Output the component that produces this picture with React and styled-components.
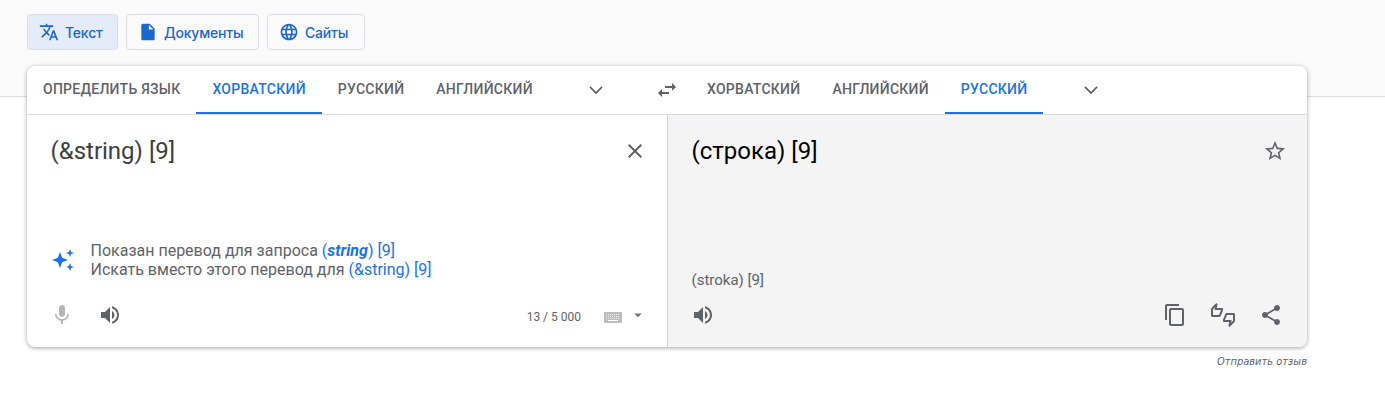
import React, { useState } from 'react';
import styled, { createGlobalStyle, css } from 'styled-components';

const icons = {
    translate: 'M12.87 15.07l-2.54-2.51.03-.03c1.74-1.94 2.98-4.17 3.71-6.53H17V4h-7V2H8v2H1v1.99h11.17C11.5 7.92 10.44 9.75 9 11.35 8.07 10.32 7.3 9.19 6.69 8h-2c.73 1.63 1.73 3.17 2.98 4.56l-5.09 5.02L4 19l5-5 3.11 3.11.76-2.04zM18.5 10h-2L12 22h2l1.12-3h4.75L21 22h2l-4.5-12zm-2.62 7l1.62-4.33L19.12 17h-3.24z',
    file: 'M6 2c-1.1 0-1.99.9-1.99 2L4 20c0 1.1.89 2 1.99 2H18c1.1 0 2-.9 2-2V8l-6-6H6zm7 7V3.5L18.5 9H13z',
    globe: 'M11.99 2C6.47 2 2 6.48 2 12s4.47 10 9.99 10C17.52 22 22 17.52 22 12S17.52 2 11.99 2zm6.93 6h-2.95c-.32-1.25-.78-2.45-1.38-3.56 1.84.63 3.37 1.91 4.33 3.56zM12 4.04c.83 1.2 1.48 2.53 1.91 3.96h-3.82c.43-1.43 1.08-2.76 1.91-3.96zM4.26 14C4.1 13.36 4 12.69 4 12s.1-1.36.26-2h3.38c-.08.66-.14 1.32-.14 2s.06 1.34.14 2H4.26zm.82 2h2.95c.32 1.25.78 2.45 1.38 3.56-1.84-.63-3.37-1.9-4.33-3.56zm2.95-8H5.08c.96-1.66 2.49-2.93 4.33-3.56C8.81 5.55 8.35 6.75 8.03 8zM12 19.96c-.83-1.2-1.48-2.53-1.91-3.96h3.82c-.43 1.43-1.08 2.76-1.91 3.96zM14.34 14H9.66c-.09-.66-.16-1.32-.16-2s.07-1.35.16-2h4.68c.09.65.16 1.32.16 2s-.07 1.34-.16 2zm.25 5.56c.6-1.11 1.06-2.31 1.38-3.56h2.95c-.96 1.65-2.49 2.93-4.33 3.56zM16.36 14c.08-.66.14-1.32.14-2s-.06-1.34-.14-2h3.38c.16.64.26 1.31.26 2s-.1 1.36-.26 2h-3.38z',
    chevron: 'M5.41 7.59L4 9l8 8 8-8-1.41-1.41L12 14.17z',
    swap: 'M6.99 11L3 15l3.99 4v-3H14v-2H6.99v-3zM21 9l-3.99-4v3H10v2h7.01v3L21 9z',
    close: 'M19 6.41L17.59 5 12 10.59 6.41 5 5 6.41 10.59 12 5 17.59 6.41 19 12 13.41 17.59 19 19 17.59 13.41 12z',
    star: 'M22 9.24l-7.19-.62L12 2 9.19 8.63 2 9.24l5.46 4.73L5.82 21 12 17.27 18.18 21l-1.63-7.03L22 9.24zM12 15.4l-3.76 2.27 1-4.28-3.32-2.88 4.38-.38L12 6.1l1.71 4.04 4.38.38-3.32 2.88 1 4.28L12 15.4z',
    sparkle: 'M9 4l2.2 5.8L17 12l-5.8 2.2L9 20l-2.2-5.8L1 12l5.8-2.2zM19 1l1.1 2.9L23 5l-2.9 1.1L19 9l-1.1-2.9L15 5l2.9-1.1zM19 15l1.1 2.9L23 19l-2.9 1.1L19 23l-1.1-2.9L15 19l2.9-1.1z',
    mic: 'M12 14c1.66 0 2.99-1.34 2.99-3L15 5c0-1.66-1.34-3-3-3S9 3.34 9 5v6c0 1.66 1.34 3 3 3zm5.3-3c0 3-2.54 5.1-5.3 5.1S6.7 14 6.7 11H5c0 3.41 2.72 6.23 6 6.72V21h2v-3.28c3.28-.48 6-3.3 6-6.72h-1.7z',
    volume: 'M3 9v6h4l5 5V4L7 9H3zm13.5 3c0-1.77-1.02-3.29-2.5-4.03v8.05c1.48-.73 2.5-2.25 2.5-4.02zM14 3.23v2.06c2.89.86 5 3.54 5 6.71s-2.11 5.85-5 6.71v2.06c4.01-.91 7-4.49 7-8.77s-2.99-7.86-7-8.77z',
    caret: 'M7 10l5 5 5-5z',
    copy: 'M16 1H4c-1.1 0-2 .9-2 2v14h2V3h12V1zm3 4H8c-1.1 0-2 .9-2 2v14c0 1.1.9 2 2 2h11c1.1 0 2-.9 2-2V7c0-1.1-.9-2-2-2zm0 16H8V7h11v14z',
    thumbs: 'M12 6c0-.55-.45-1-1-1H5.82l.66-3.18.02-.23c0-.31-.13-.59-.33-.8L5.38 0 .44 4.94C.17 5.21 0 5.59 0 6v6.5c0 .83.67 1.5 1.5 1.5h6.75c.62 0 1.15-.38 1.38-.91l2.26-5.29c.07-.17.11-.36.11-.55V6zm-2 1.13L7.92 12H2V6.21l1.93-1.93L3.36 7H10v.13zM22.5 10h-6.75c-.62 0-1.15.38-1.38.91l-2.26 5.29c-.07.17-.11.36-.11.55V18c0 .55.45 1 1 1h5.18l-.66 3.18-.02.24c0 .31.13.59.33.8l.79.78 4.94-4.94c.27-.27.44-.65.44-1.06v-6.5c0-.83-.67-1.5-1.5-1.5zm-.5 7.79l-1.93 1.93.57-2.72H14v-.13L16.08 12H22v5.79z',
    share: 'M18 16.08c-.76 0-1.44.3-1.96.77L8.91 12.7c.05-.23.09-.46.09-.7s-.04-.47-.09-.7l7.05-4.11c.54.5 1.25.81 2.04.81 1.66 0 3-1.34 3-3s-1.34-3-3-3-3 1.34-3 3c0 .24.04.47.09.7L8.04 9.81C7.5 9.31 6.79 9 6 9c-1.66 0-3 1.34-3 3s1.34 3 3 3c.79 0 1.5-.31 2.04-.81l7.12 4.16c-.05.21-.08.43-.08.65 0 1.61 1.31 2.92 2.92 2.92s2.92-1.31 2.92-2.92-1.31-2.92-2.92-2.92z'
};

const Icon = ({ name, size = 24 }) => (
    <Svg width={size} height={size} viewBox="0 0 24 24">
        <path d={icons[name]} />
    </Svg>
);

const KeyboardIcon = () => (
    <Svg width="18" height="11" viewBox="0 0 18 11">
        <path d="M0 0h18v11H0z" fill="#bdbdbd" />
        <path d="M2 2.5h14M2 4.5h14M2 6.5h14" stroke="#eee" strokeDasharray="1 1" />
        <path d="M4 8.5h10" stroke="#fff" />
    </Svg>
);

const modes = [
    { icon: 'translate', label: 'Текст', width: 91 },
    { icon: 'file', label: 'Документы', width: 133 },
    { icon: 'globe', label: 'Сайты', width: 98 }
];
const sourceLangs = ['Определить язык', 'Хорватский', 'Русский', 'Английский'];
const targetLangs = ['Хорватский', 'Английский', 'Русский'];

const App = () => {
    const [mode, setMode] = useState('Текст');
    const [source, setSource] = useState('Хорватский');
    const [target, setTarget] = useState('Русский');

    return (
        <>
            <GlobalStyle />
            <Header>
                {modes.map(m => (
                    <ModeButton key={m.label} $width={m.width} $active={mode === m.label} onClick={() => setMode(m.label)}>
                        <Icon name={m.icon} size={20} />
                        {m.label}
                    </ModeButton>
                ))}
            </Header>
            <Main>
                <Card>
                    <LangBar>
                        <SourceTabs>
                            {sourceLangs.map(l => (
                                <Tab key={l} $active={source === l} onClick={() => setSource(l)}>{l}</Tab>
                            ))}
                            <More><Icon name="chevron" size={20} /></More>
                        </SourceTabs>
                        <Swap><Icon name="swap" /></Swap>
                        <TargetTabs>
                            {targetLangs.map(l => (
                                <Tab key={l} $active={target === l} onClick={() => setTarget(l)}>{l}</Tab>
                            ))}
                            <More><Icon name="chevron" size={20} /></More>
                        </TargetTabs>
                    </LangBar>
                    <Panes>
                        <SourcePane>
                            <TextRow>
                                <span>(&amp;string) [9]</span>
                                <IconButton><Icon name="close" /></IconButton>
                            </TextRow>
                            <Suggestion>
                                <Icon name="sparkle" />
                                <div>
                                    Показан перевод для запроса <Link>(<b>string</b>) [9]</Link><br />
                                    Искать вместо этого перевод для <Link>(&amp;string) [9]</Link>
                                </div>
                            </Suggestion>
                            <Tools>
                                <IconButton $muted><Icon name="mic" /></IconButton>
                                <IconButton><Icon name="volume" /></IconButton>
                                <Counter>13 / 5 000</Counter>
                                <KeyboardButton>
                                    <KeyboardIcon />
                                    <Icon name="caret" size={18} />
                                </KeyboardButton>
                            </Tools>
                        </SourcePane>
                        <TargetPane>
                            <TextRow>
                                <span>(строка) [9]</span>
                                <IconButton><Icon name="star" /></IconButton>
                            </TextRow>
                            <Translit>(stroka) [9]</Translit>
                            <Tools>
                                <IconButton><Icon name="volume" /></IconButton>
                                <Actions>
                                    <IconButton><Icon name="copy" /></IconButton>
                                    <IconButton><Icon name="thumbs" /></IconButton>
                                    <IconButton><Icon name="share" /></IconButton>
                                </Actions>
                            </Tools>
                        </TargetPane>
                    </Panes>
                </Card>
                <Feedback>Отправить отзыв</Feedback>
            </Main>
        </>
    );
};

const GlobalStyle = createGlobalStyle`
    * {
        box-sizing: border-box;
    }
    body {
        margin: 0;
        background: #fff;
        color: #5f6368;
        font-family: Roboto, sans-serif;
    }
    button {
        padding: 0;
        border: 0;
        background: none;
        font: inherit;
        color: inherit;
        cursor: pointer;
    }
`
const Svg = styled.svg`
    display: block;
    flex: none;
    fill: currentColor;
`
const Header = styled.header`
    display: flex;
    align-items: flex-start;
    gap: 8px;
    height: 97px;
    padding: 14px 27px;
    background: #fafafa;
    border-bottom: 1px solid #dadce0;
`
const ModeButton = styled.button`
    display: flex;
    align-items: center;
    gap: 6px;
    width: ${props => props.$width}px;
    height: 36px;
    && {
        padding-left: 11px;
        border: 1px solid #dadce0;
        border-radius: 4px;
        color: #1967d2;
        font-family: Inter, sans-serif;
        font-weight: 500;
        font-size: 14px;
        letter-spacing: -0.2px;
        white-space: nowrap;
    }
    ${props => props.$active && css`
        && {
            background: #e4ecfa;
        }
    `}
`
const Main = styled.main`
    width: 1280px;
    margin: -31px 0 0 27px;
`
const Card = styled.section`
    position: relative;
    overflow: hidden;
    height: 281px;
    border-radius: 8px;
    background: #fff;
    box-shadow: 0 1px 4px 0 rgba(0, 0, 0, 0.37);
`
const LangBar = styled.nav`
    display: flex;
    height: 49px;
    border-bottom: 1px solid #dadce0;
`
const SourceTabs = styled.div`
    display: flex;
    width: 616px;
`
const TargetTabs = styled.div`
    display: flex;
    flex: 1;
`
const Tab = styled.button`
    && {
        height: 48px;
        padding: 0 16px;
        border-bottom: 2px solid transparent;
        font-weight: 500;
        font-size: 14px;
        letter-spacing: 0.26px;
        text-transform: uppercase;
        white-space: nowrap;
    }
    ${props => props.$active && css`
        && {
            color: #1a73e8;
            border-bottom-color: #1a73e8;
        }
    `}
`
const More = styled.button`
    display: flex;
    align-items: center;
    height: 48px;
    && {
        margin-left: 37.4px;
    }
`
const Swap = styled.button`
    display: flex;
    align-items: center;
    justify-content: center;
    width: 48px;
    height: 48px;
`
const Panes = styled.div`
    display: flex;
    height: 232px;
`
const Pane = styled.div`
    display: flex;
    flex-direction: column;
    padding: 20px 20px 20px 23.5px;
`
const SourcePane = styled(Pane)`
    width: 640px;
    color: #3c4043;
`
const TargetPane = styled(Pane)`
    flex: 1;
    border-left: 1px solid #d4d4d4;
    background: #f4f4f4;
    color: #000;
`
const TextRow = styled.div`
    display: flex;
    justify-content: space-between;
    height: 32px;
    font-size: 24px;
    line-height: 32px;
`
const IconButton = styled.button`
    display: flex;
    align-items: center;
    justify-content: center;
    width: 24px;
    height: 32px;
    && {
        color: ${props => props.$muted ? '#b5b6b8' : '#5f6368'};
    }
`
const Suggestion = styled.div`
    display: flex;
    align-items: center;
    gap: 16px;
    margin-top: 74px;
    font-size: 16px;
    line-height: 19px;
    color: #5f6368;
    svg {
        color: #1a73e8;
    }
`
const Link = styled.a`
    color: #1a73e8;
    cursor: pointer;
    b {
        font-style: italic;
    }
`
const Translit = styled.div`
    margin-top: 103px;
    font-size: 15px;
    line-height: 20px;
    color: #5f6368;
`
const Tools = styled.div`
    display: flex;
    align-items: center;
    gap: 24px;
    height: 32px;
    margin-top: auto;
    margin-left: -0.5px;
    margin-bottom: -4px;
`
const Counter = styled.span`
    margin-left: auto;
    margin-right: -1px;
    padding-top: 3px;
    font-size: 12px;
    color: #5f6368;
`
const KeyboardButton = styled.button`
    display: flex;
    align-items: flex-start;
    gap: 7px;
    && {
        color: #757575;
    }
    svg:first-child {
        margin-top: 6px;
    }
`
const Actions = styled.div`
    display: flex;
    gap: 24px;
    margin-left: auto;
    margin-right: 4px;
`
const Feedback = styled.div`
    margin-top: 7px;
    text-align: right;
    font-family: 'DejaVu Sans Condensed', 'DejaVu Sans', sans-serif;
    font-style: italic;
    font-size: 11px;
    line-height: 15px;
`

export default App;
